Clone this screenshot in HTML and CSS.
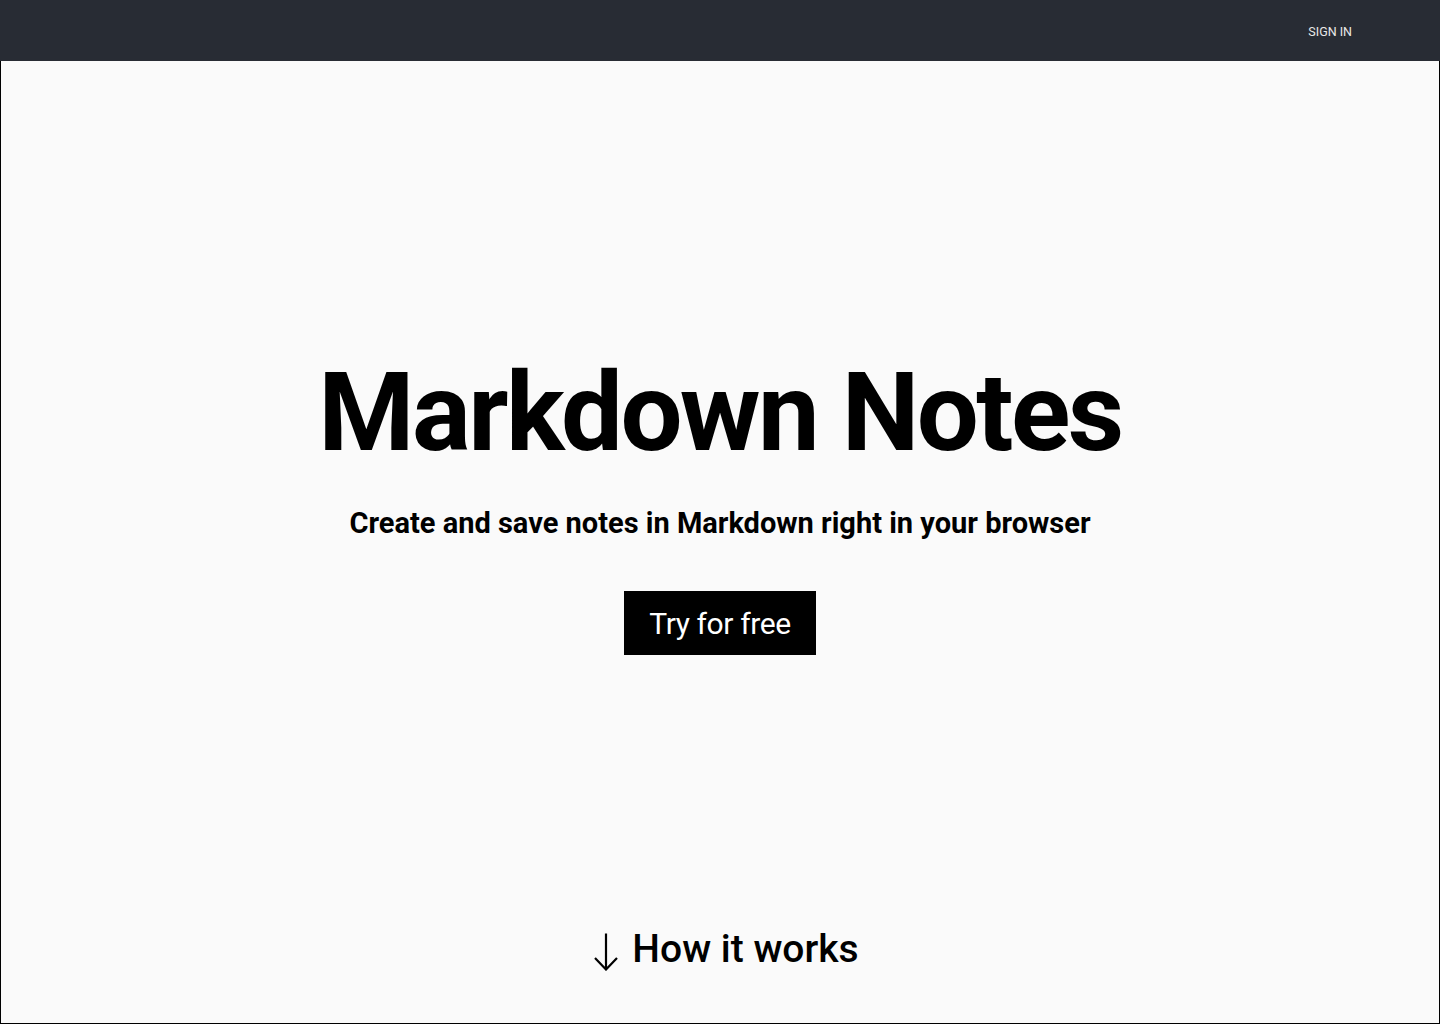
FILE: index.html
```html
<!DOCTYPE html>
<html lang="en">
<head>
<meta charset="utf-8">
<title>Markdown Notes</title>
<link rel="stylesheet" href="styles.css">
</head>
<body>
<div class="app">
  <header class="topbar">
    <a class="signin" href="#">SIGN IN</a>
  </header>
  <main class="main">
    <section class="hero">
      <h1 class="title">Markdown Notes</h1>
      <p class="subtitle">Create and save notes in Markdown right in your browser</p>
      <a class="cta" href="#">Try for free</a>
    </section>
    <a class="how" href="#">
      <svg class="arrow" width="24" height="38" viewBox="0 0 24 38" aria-hidden="true">
        <path d="M12 0.5 V36.5 M1 25 L12 36.5 L23 25" fill="none" stroke="#000" stroke-width="2.2" stroke-linecap="butt" stroke-linejoin="miter"/>
      </svg>
      <span>How it works</span>
    </a>
  </main>
</div>
</body>
</html>
```
FILE: styles.css
```css
* { box-sizing: border-box; }
html, body { margin: 0; padding: 0; }
body {
  font-family: Roboto, "Liberation Sans", Arial, sans-serif;
  background: #fafafa;
  color: #000;
}
.app {
  width: 1440px;
  height: 1024px;
  display: flex;
  flex-direction: column;
}
.topbar {
  height: 61px;
  flex: none;
  background: #282c34;
  display: flex;
  align-items: center;
  justify-content: flex-end;
  padding-right: 88px;
}
.signin {
  color: #e8e8e8;
  text-decoration: none;
  font-size: 12.5px;
  line-height: 1;
  margin-top: 3px;
}
.main {
  flex: 1;
  border: 1px solid #000;
  border-top: none;
  display: flex;
  flex-direction: column;
  align-items: center;
}
.hero {
  flex: 1;
  display: flex;
  flex-direction: column;
  align-items: center;
  padding-top: 297px;
}
.title {
  margin: 0;
  font-size: 110px;
  line-height: 1;
  font-weight: 700;
  letter-spacing: -2.6px;
}
.subtitle {
  margin: 41px 0 0;
  font-size: 29px;
  line-height: 1;
  font-weight: 700;
}
.cta {
  margin-top: 53px;
  width: 192px;
  height: 64px;
  background: #000;
  color: #fff;
  text-decoration: none;
  font-size: 30px;
  letter-spacing: -0.4px;
  display: flex;
  align-items: center;
  justify-content: center;
}
.how {
  color: #000;
  text-decoration: none;
  font-size: 39px;
  font-weight: 500;
  line-height: 1;
  margin-bottom: 52px;
  margin-left: 13px;
  display: flex;
  align-items: flex-start;
  gap: 14px;
}
.arrow {
  display: block;
  margin-top: 3px;
  flex: none;
}
```
